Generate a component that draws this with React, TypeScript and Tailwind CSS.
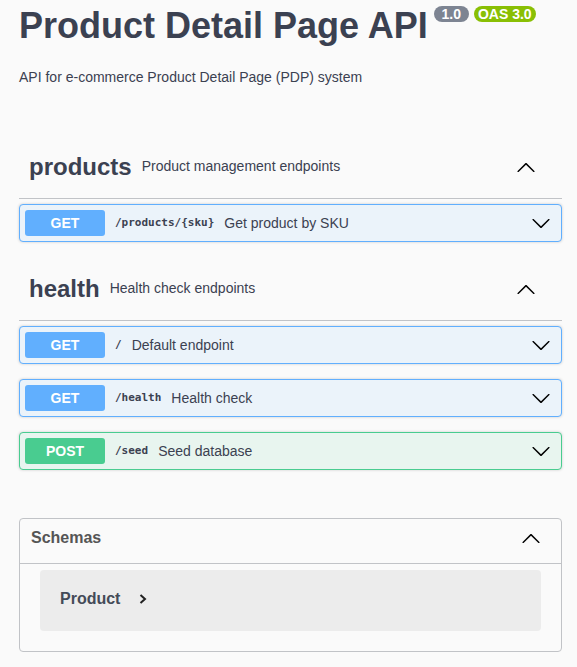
import React from "react";

const ChevronDown = () => (
  <svg width="20" height="20" viewBox="0 0 20 20" className="shrink-0">
    <path
      fill="#000"
      d="M17.418 6.109c.272-.268.709-.268.979 0s.271.701 0 .969l-7.908 7.83c-.27.268-.707.268-.979 0l-7.908-7.83c-.27-.268-.27-.701 0-.969.271-.268.709-.268.979 0L10 13.25l7.418-7.141z"
    />
  </svg>
);

const ChevronUp = () => (
  <svg width="20" height="20" viewBox="0 0 20 20" className="shrink-0">
    <path
      fill="#000"
      d="M17.418 14.908c.272.268.709.268.979 0s.271-.701 0-.969l-7.908-7.83c-.27-.268-.707-.268-.979 0l-7.908 7.83c-.27.268-.27.701 0 .969.271.268.709.268.979 0L10 7.767l7.418 7.141z"
    />
  </svg>
);

type Op = { method: "GET" | "POST"; path: string; summary: string };

const OpBlock = ({ op }: { op: Op }) => {
  const isGet = op.method === "GET";
  return (
    <div
      className={
        isGet
          ? "mb-[15px] flex h-[38px] items-center rounded-[4px] border border-[#61affe] bg-[#ebf3fa] pl-[5px] pr-[10px] shadow-[0_0_3px_rgba(0,0,0,0.19)]"
          : "mb-[15px] flex h-[38px] items-center rounded-[4px] border border-[#49cc90] bg-[#e8f5ef] pl-[5px] pr-[10px] shadow-[0_0_3px_rgba(0,0,0,0.19)]"
      }
    >
      <div
        className={
          isGet
            ? "flex h-[26px] w-[80px] shrink-0 items-center justify-center rounded-[3px] bg-[#61affe] text-[14px] font-bold text-white"
            : "flex h-[26px] w-[80px] shrink-0 items-center justify-center rounded-[3px] bg-[#49cc90] text-[14px] font-bold text-white"
        }
      >
        {op.method}
      </div>
      <span className="ml-[10px] font-['DejaVu_Sans_Mono',monospace] text-[11px] font-bold text-[#3b4151]">
        {op.path}
      </span>
      <span className="ml-[10px] flex-1 text-[14px] text-[#3b4151]">{op.summary}</span>
      <ChevronDown />
    </div>
  );
};

const TagSection = ({ name, desc, ops }: { name: string; desc: string; ops: Op[] }) => (
  <div>
    <div className="flex h-[64px] items-center border-b border-[#c1c3c7] pl-[10px] pr-[26px]">
      <span className="text-[24px] font-bold text-[#3b4151]">{name}</span>
      <span className="ml-[10px] flex-1 text-[14px] text-[#3b4151]">{desc}</span>
      <ChevronUp />
    </div>
    <div className="mt-[5px]">
      {ops.map((op, i) => (
        <OpBlock key={i} op={op} />
      ))}
    </div>
  </div>
);

export default function App() {
  return (
    <div className="min-h-screen bg-[#fafafa] font-['Liberation_Sans',Arial,sans-serif] text-[#3b4151]">
      <div className="ml-[19px] mr-[15px] pb-[20px]">
        <div className="flex items-start">
          <h2 className="mt-[8px] text-[36px] font-bold leading-[36px] text-[#3b4151]">
            Product Detail Page API
          </h2>
          <div className="ml-[6px] mt-[6px] flex gap-[5px]">
            <span className="flex h-[16px] w-[35px] items-center justify-center rounded-full bg-[#7d8492] text-[14px] font-bold leading-[16px] text-white">
              1.0
            </span>
            <span className="flex h-[16px] w-[62px] items-center justify-center rounded-full bg-[#89bf04] text-[14px] font-bold leading-[16px] text-white">
              OAS 3.0
            </span>
          </div>
        </div>
        <p className="mt-[23px] text-[14px] leading-[20px] text-[#3b4151]">
          API for e-commerce Product Detail Page (PDP) system
        </p>

        <div className="mt-[48px]">
          <TagSection
            name="products"
            desc="Product management endpoints"
            ops={[{ method: "GET", path: "/products/{sku}", summary: "Get product by SKU" }]}
          />
          <TagSection
            name="health"
            desc="Health check endpoints"
            ops={[
              { method: "GET", path: "/", summary: "Default endpoint" },
              { method: "GET", path: "/health", summary: "Health check" },
              { method: "POST", path: "/seed", summary: "Seed database" },
            ]}
          />
        </div>

        <div className="mt-[48px] rounded-[4px] border border-[#c1c3c7]">
          <div className="flex h-[45px] items-center border-b border-[#c1c3c7] pb-[6px] pl-[11px] pr-[20px]">
            <span className="flex-1 text-[16px] font-bold text-[#555555]">Schemas</span>
            <ChevronUp />
          </div>
          <div className="mx-[20px] mb-[20px] mt-[6px] flex h-[61px] items-center rounded-[4px] bg-[#ececec] pb-[4px] pl-[20px]">
            <span className="text-[16px] font-bold text-[#444b58]">Product</span>
            <svg width="8" height="10" viewBox="0 0 8 10" className="ml-[19px]">
              <path d="M1.5 1 L6 5 L1.5 9" fill="none" stroke="#222" strokeWidth="2" />
            </svg>
          </div>
        </div>
      </div>
    </div>
  );
}
